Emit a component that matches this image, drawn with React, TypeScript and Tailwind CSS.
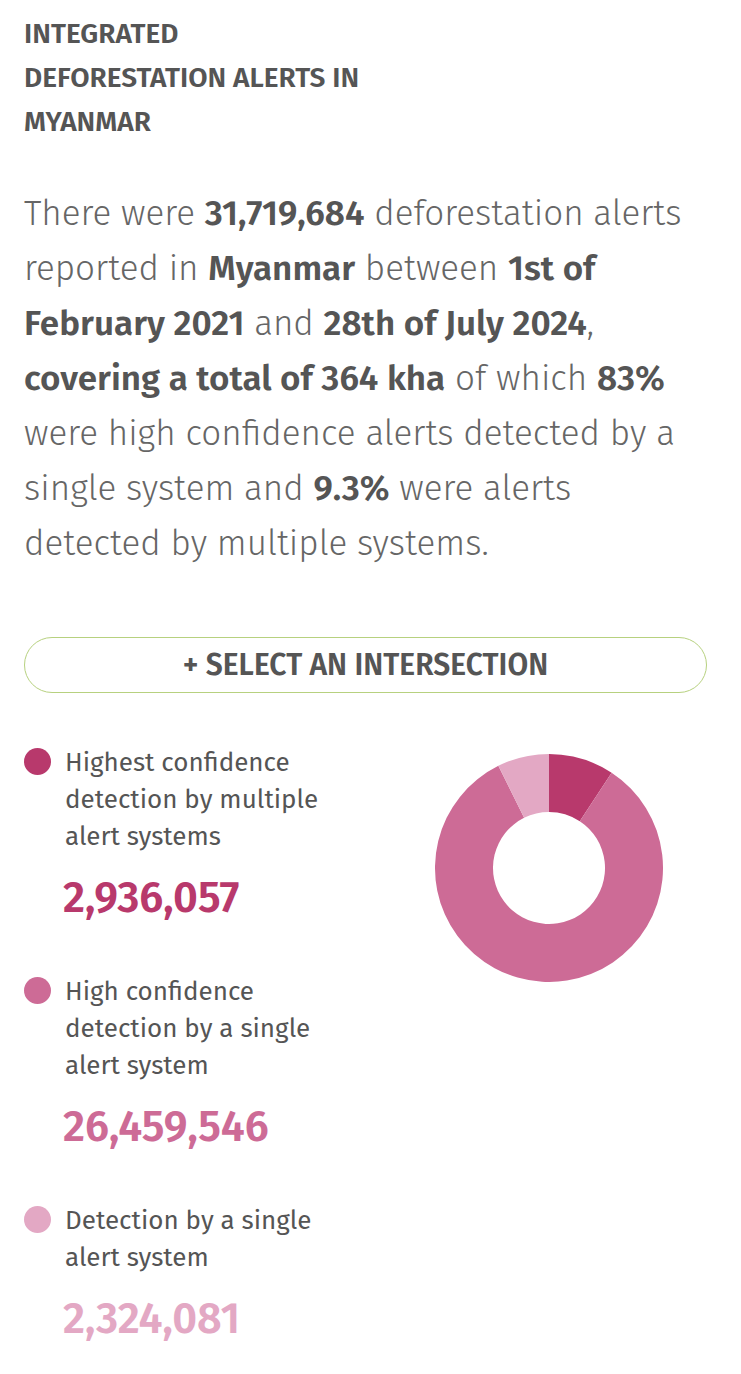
import React from 'react';

const TOTAL = 31719684;

const items = [
    { label: 'Highest confidence detection by multiple alert systems', value: 2936057, color: '#b8396c', text: 'text-[#b8396c]', dot: 'bg-[#b8396c]' },
    { label: 'High confidence detection by a single alert system', value: 26459546, color: '#cd6b96', text: 'text-[#cd6b96]', dot: 'bg-[#cd6b96]' },
    { label: 'Detection by a single alert system', value: 2324081, color: '#e3a8c4', text: 'text-[#e3a8c4]', dot: 'bg-[#e3a8c4]' },
];

function arcPath(start: number, end: number, R: number, r: number, c: number) {
    const pt = (a: number, rad: number) => {
        const t = (a - 0.25) * Math.PI * 2;
        return `${(c + rad * Math.cos(t)).toFixed(3)} ${(c + rad * Math.sin(t)).toFixed(3)}`;
    };
    const large = end - start > 0.5 ? 1 : 0;
    return `M ${pt(start, R)} A ${R} ${R} 0 ${large} 1 ${pt(end, R)} L ${pt(end, r)} A ${r} ${r} 0 ${large} 0 ${pt(start, r)} Z`;
}

function Donut() {
    let acc = 0;
    return (
        <svg width="228" height="228" viewBox="0 0 228 228">
            {items.map((it) => {
                const start = acc;
                acc += it.value / TOTAL;
                return <path key={it.label} d={arcPath(start, Math.min(acc, 0.99999), 114, 56, 114)} fill={it.color} />;
            })}
        </svg>
    );
}

export default function App() {
    return (
        <div className="min-h-screen bg-white pl-6 pr-[34px] pt-[12px] font-['Fira_Sans','Open_Sans',sans-serif]">
            <h1 className="max-w-[350px] text-[28px] font-semibold uppercase leading-[44px] text-[#555]">
                Integrated deforestation alerts in Myanmar
            </h1>

            <p className="mt-[42px] text-[35px] font-light leading-[55px] text-[#666]">
                There were <b className="font-semibold text-[#555]">31,719,684</b> deforestation alerts reported in{' '}
                <b className="font-semibold text-[#555]">Myanmar</b> between <b className="font-semibold text-[#555]">1st of February 2021</b> and{' '}
                <b className="font-semibold text-[#555]">28th of July 2024</b>, <b className="font-semibold text-[#555]">covering a total of 364 kha</b> of which{' '}
                <b className="font-semibold text-[#555]">83%</b> were high confidence alerts detected by a single system and{' '}
                <b className="font-semibold text-[#555]">9.3%</b> were alerts detected by multiple systems.
            </p>

            <button className="mt-[66px] flex h-[56px] w-full items-center justify-center rounded-full border border-[#b7d17f] text-[30px] font-semibold uppercase text-[#555]">
                + Select an intersection
            </button>

            <div className="mt-[51px] flex">
                <div className="flex w-[366px] flex-col gap-[50px]">
                    {items.map((it) => (
                        <div key={it.label} className="flex items-start gap-[14px]">
                            <span className={`mt-[4px] h-[27px] w-[27px] shrink-0 rounded-full ${it.dot}`} />
                            <div className="max-w-[270px]">
                                <p className="text-[26px] leading-[37px] text-[#555]">{it.label}</p>
                                <p className={`mt-[18px] -ml-[2px] text-[43px] font-semibold leading-[50px] ${it.text}`}>
                                    {it.value.toLocaleString('en-US')}
                                </p>
                            </div>
                        </div>
                    ))}
                </div>
                <div className="flex flex-1 justify-center pt-[10px]">
                    <div>
                        <Donut />
                    </div>
                </div>
            </div>
        </div>
    );
}
